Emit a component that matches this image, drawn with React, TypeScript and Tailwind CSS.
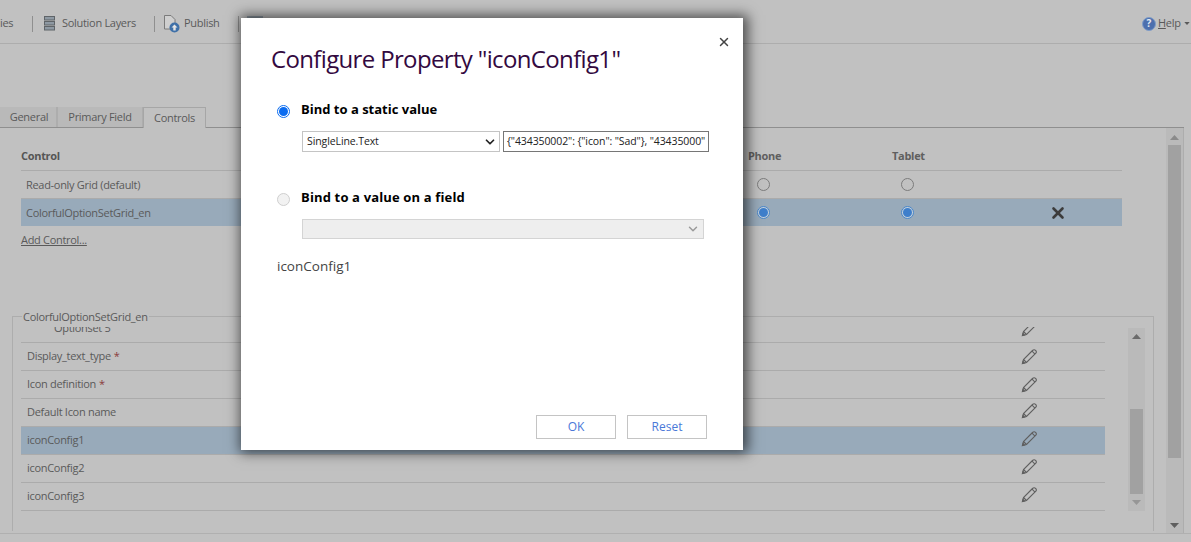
import { ChevronDown, X } from "lucide-react";

const font = { fontFamily: '"Open Sans", "Noto Sans", sans-serif' };

function Pencil() {
  return (
    <svg width="16" height="16" viewBox="0 0 16 16" fill="none" stroke="#5f5f5f" strokeWidth="1.1">
      <path d="M1.5 14.5 L2.5 10.5 L11.5 1.5 C12.5 .6 14 .8 14.8 1.6 C15.5 2.4 15.4 3.6 14.6 4.4 L5.5 13.5 Z" />
      <path d="M2.5 10.5 L5.5 13.5 M11 2.2 L14 5.2" />
      <path d="M1.5 14.5 L2 12.5 L3.5 14 Z" fill="#5f5f5f" />
    </svg>
  );
}

function ArrowUp({ color = "#6b6b6b" }: { color?: string }) {
  return (
    <svg width="9" height="5" viewBox="0 0 9 5">
      <path d="M4.5 0 L9 5 L0 5 Z" fill={color} />
    </svg>
  );
}

function ArrowDown({ color = "#6b6b6b" }: { color?: string }) {
  return (
    <svg width="9" height="5" viewBox="0 0 9 5">
      <path d="M0 0 L9 0 L4.5 5 Z" fill={color} />
    </svg>
  );
}

function SmallRadio({ on }: { on?: boolean }) {
  if (on) {
    return (
      <span className="ml-[9px] flex h-[13px] w-[13px] items-center justify-center rounded-full border border-[#4a86c8] bg-[#c4d0da]">
        <span className="h-[9px] w-[9px] rounded-full bg-[#3f7fcb]" />
      </span>
    );
  }
  return <span className="ml-[9px] block h-[13px] w-[13px] rounded-full border border-[#7c7c7c]" />;
}

const props = [
  { name: "Display_text_type", req: true },
  { name: "Icon definition", req: true },
  { name: "Default Icon name" },
  { name: "iconConfig1", sel: true },
  { name: "iconConfig2" },
  { name: "iconConfig3" },
];

export default function App() {
  return (
    <div style={font} className="relative h-[542px] w-[1191px] overflow-hidden bg-[#c1c1c1] text-[#5a5a5a]">
      {/* toolbar */}
      <div className="flex h-[44px] items-center border-b border-[#adadad] pt-[4px] text-[11px] tracking-[-0.3px]">
        <span className="ml-[-12px] w-[44px] pl-[12px]">ies</span>
        <span className="h-[16px] w-px bg-[#8f8f8f]" />
        <svg className="ml-[11px]" width="11" height="15" viewBox="0 0 11 15">
          <g fill="#8e99a3" stroke="#5f6468" strokeWidth="1">
            <rect x=".5" y=".5" width="10" height="3.5" />
            <rect x=".5" y="5.5" width="10" height="3.5" />
            <rect x=".5" y="10.5" width="10" height="3.5" />
          </g>
        </svg>
        <span className="ml-[7px] w-[73px] whitespace-nowrap">Solution Layers</span>
        <span className="ml-[19px] h-[16px] w-px bg-[#8f8f8f]" />
        <svg className="ml-[9px]" width="16" height="18" viewBox="0 0 16 18">
          <path d="M.5 .5 H7 L11 4.5 V14 H.5 Z" fill="#cfcfcf" stroke="#7b7b7b" />
          <circle cx="10.5" cy="12.5" r="5" fill="#3f70a8" />
          <path d="M10.5 9.5 L13.5 12.5 H11.7 V15.5 H9.3 V12.5 H7.5 Z" fill="#e6e6e6" />
        </svg>
        <span className="ml-[4px] w-[36px]">Publish</span>
        <span className="ml-[18px] h-[16px] w-px bg-[#8f8f8f]" />
        <span className="ml-[8px] h-[16px] w-[16px] bg-[#8e99a3]" />
        <span className="ml-auto flex h-[14px] w-[14px] items-center justify-center rounded-full border border-[#7f9cc8] bg-[#4c6fae] text-[10px] font-bold tracking-normal text-[#e6ebf3]">
          ?
        </span>
        <span className="ml-[2px] w-[24px]">
          <span className="underline">H</span>elp
        </span>
        <svg className="ml-[2px] mr-[1px]" width="6" height="3" viewBox="0 0 9 5">
          <path d="M0 0 L9 0 L4.5 5 Z" fill="#5a5a5a" />
        </svg>
      </div>

      {/* tabs */}
      <div className="mr-[7px] mt-[63px] flex h-[21px] items-stretch border-b border-[#8f8f8f] text-[11px] tracking-[-0.3px]">
        <span className="flex w-[58px] items-center justify-center border-r-2 border-[#adadad] bg-[#b9b9b9] pl-[2px]">General</span>
        <span className="flex w-[85px] items-center justify-center border-r border-[#adadad] bg-[#b9b9b9]">Primary Field</span>
        <span className="relative mb-[-1px] flex w-[63px] items-center justify-center border-x border-t border-[#a6a6a6] bg-[#c1c1c1]">Controls</span>
      </div>

      <div className="flex h-[406px] items-stretch border-b border-[#b0b0b0] pr-[7px] text-[11px] tracking-[-0.3px]">
        <div className="w-[1166px] shrink-0">
          {/* controls table */}
          <div className="ml-[21px] w-[1101px]">
            <div className="mt-[20px] grid h-[15px] grid-cols-[727px_144px_1fr] items-center font-bold text-[#5f5f5f]">
              <span className="text-[#555]">Control</span>
              <span>Phone</span>
              <span>Tablet</span>
            </div>
            <div className="mt-[7px] grid h-[28px] grid-cols-[722px_144px_157px_1fr] items-center border-t border-[#ababab] pl-[5px]">
              <span className="pt-[1px]">Read-only Grid (default)</span>
              <SmallRadio />
              <SmallRadio />
            </div>
            <div className="grid h-[28px] grid-cols-[722px_144px_157px_1fr] items-center border-t border-[#ababab] bg-[#98aaba] pl-[5px]">
              <span className="pt-[1px]">ColorfulOptionSetGrid_en</span>
              <SmallRadio on />
              <SmallRadio on />
              <X size={18} strokeWidth={3.5} className="text-[#3c3c3c]" />
            </div>
            <div className="mt-[6px] h-[16px] underline">Add Control...</div>
          </div>

          {/* properties */}
          <fieldset className="ml-[12px] mt-[62px] h-[221px] w-[1142px] border border-b-0 border-[#adadad]">
            <legend className="ml-[9px] px-px leading-[13px]">ColorfulOptionSetGrid_en</legend>
            <div className="mt-[4px] flex items-start">
              <div className="ml-[8px] h-[184px] w-[1084px] overflow-hidden">
                <div className="mt-[-12px] flex h-[28px] items-center justify-between border-b border-[#ababab]">
                  <span className="pl-[33px]">Optionset 5</span>
                  <span className="mr-[68px]">
                    <Pencil />
                  </span>
                </div>
                {props.map((p) => (
                  <div
                    key={p.name}
                    className={
                      p.sel
                        ? "flex h-[28px] items-center justify-between border-b border-[#ababab] bg-[#98aaba] pl-[6px]"
                        : "flex h-[28px] items-center justify-between border-b border-[#ababab] pl-[6px]"
                    }
                  >
                    <span className="pb-[1px]">
                      {p.name}
                      {p.req && <span className="ml-[3px] text-[#8a3b3b]">*</span>}
                    </span>
                    <span className={p.req ? "mr-[68px]" : "mb-[3px] mr-[68px]"}>
                      <Pencil />
                    </span>
                  </div>
                ))}
              </div>
              {/* inner scrollbar */}
              <div className="ml-[23px] mt-[1px] flex h-[183px] w-[17px] flex-col items-center bg-[#bababa]">
                <span className="mt-[6px]">
                  <ArrowUp />
                </span>
                <span className="mt-[70px] h-[85px] w-[13px] bg-[#a1a1a1]" />
                <span className="mt-[6px]">
                  <ArrowDown color="#969696" />
                </span>
              </div>
            </div>
          </fieldset>
        </div>

        {/* outer scrollbar */}
        <div className="flex w-[18px] flex-col items-center border-r border-[#adadad] bg-[#bababa]">
          <span className="mt-[7px] h-[10px]">
            <ArrowUp color="#8a8a8a" />
          </span>
          <span className="h-[313px] w-[13px] bg-[#a1a1a1]" />
          <span className="mt-[65px]">
            <ArrowDown color="#5f5f5f" />
          </span>
        </div>
      </div>

      {/* modal */}
      <div className="absolute left-[241px] top-[18px] h-[432px] w-[502px] bg-white pl-[31px] shadow-[2px_0_12px_3px_rgba(0,0,0,0.6)]">
        <button className="absolute right-[12px] top-[17px] text-[#444]">
          <X size={14} strokeWidth={2.5} />
        </button>
        <h1 className="ml-[-1px] mt-[22px] h-[38px] whitespace-nowrap text-[24px] leading-[38px] tracking-[-0.65px] text-[#33093f]">
          Configure Property "iconConfig1"
        </h1>

        <div className="ml-[5px] mt-[22px] flex h-[20px] items-center">
          <span className="mt-[3px] flex h-[13px] w-[13px] items-center justify-center rounded-full border border-[#0b6cf0] bg-white">
            <span className="h-[9px] w-[9px] rounded-full bg-[#0b6cf0]" />
          </span>
          <span className="ml-[11px] text-[13px] font-bold text-black">Bind to a static value</span>
        </div>
        <div className="ml-[30px] mt-[11px] flex gap-[3px] text-[10.5px] tracking-[-0.1px] text-[#222]">
          <div className="flex h-[21px] w-[198px] items-center justify-between border border-[#c4c4c4] pl-[4px] pr-[2px] pt-[1px]">
            SingleLine.Text
            <ChevronDown size={14} strokeWidth={3} className="text-[#222]" />
          </div>
          <div className="flex h-[21px] w-[206px] items-center overflow-hidden whitespace-nowrap border border-[#767676] pl-[3px] pt-[1px]">
            {'{"434350002": {"icon": "Sad"}, "43435000"'}
          </div>
        </div>

        <div className="ml-[5px] mt-[36px] flex h-[20px] items-center">
          <span className="mt-[2px] h-[13px] w-[13px] rounded-full border border-[#cfcfcf] bg-[#f2f2f2]" />
          <span className="ml-[11px] text-[13px] font-bold tracking-[0.15px] text-black">Bind to a value on a field</span>
        </div>
        <div className="ml-[30px] mt-[11px] flex h-[20px] w-[402px] items-center justify-end border border-[#d4d4d4] bg-[#eeeeee] pr-[3px]">
          <ChevronDown size={14} strokeWidth={2.5} className="text-[#9a9a9a]" />
        </div>

        <div className="ml-[5px] mt-[17px] h-[20px] text-[13.5px] leading-[20px] text-[#444]">iconConfig1</div>

        <div className="ml-[264px] mt-[139px] flex gap-[11px] text-[12px] text-[#4a78d8]">
          <button className="h-[24px] w-[80px] border border-[#c4c4c4]">OK</button>
          <button className="h-[24px] w-[80px] border border-[#c4c4c4]">Reset</button>
        </div>
      </div>
    </div>
  );
}
